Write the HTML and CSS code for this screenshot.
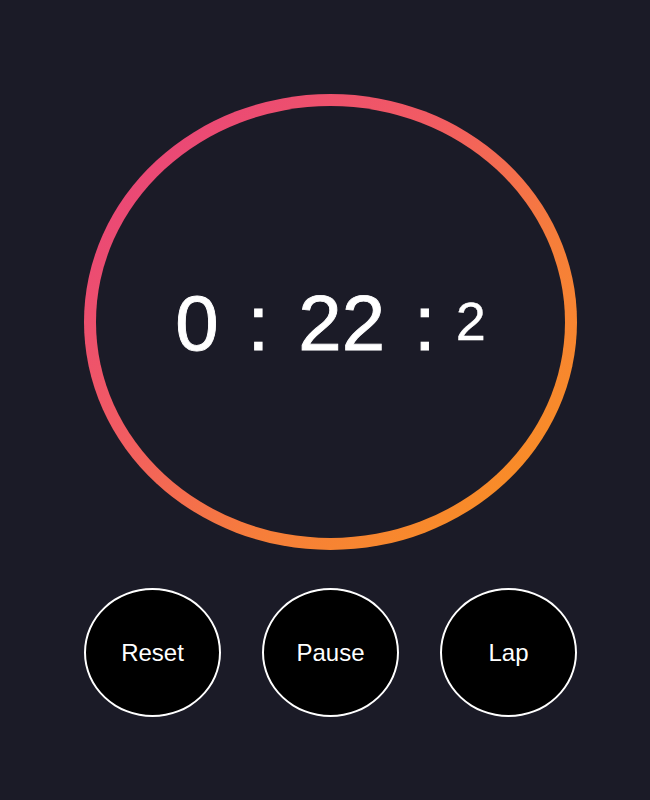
FILE: index.html
```html
<!DOCTYPE html>
<html>
<head>
<meta charset="utf-8">
<link rel="stylesheet" href="styles.css">
</head>
<body>
<main class="app">
  <div class="ring">
    <div class="face">
      <div class="time">
        <span class="big">0</span><span class="big colon">:</span><span class="big">22</span><span class="big colon">:</span><span class="small">2</span>
      </div>
    </div>
  </div>
  <div class="controls">
    <button class="btn">Reset</button>
    <button class="btn">Pause</button>
    <button class="btn">Lap</button>
  </div>
</main>
</body>
</html>
```
FILE: styles.css
```css
html, body {
  margin: 0;
  padding: 0;
  background: #1b1b27;
  height: 100%;
}
body {
  font-family: "Liberation Sans", Arial, sans-serif;
  color: #fff;
}
.app {
  width: 493px;
  margin-left: 84px;
  padding-top: 94px;
}
.ring {
  width: 493px;
  height: 456px;
  box-sizing: border-box;
  padding: 12px;
  border-radius: 50%;
  background: linear-gradient(135deg, #e63d80 0%, #f25c62 40%, #f67e3a 65%, #fa951c 100%);
}
.face {
  width: 100%;
  height: 100%;
  border-radius: 50%;
  background: #1b1b27;
  display: flex;
  align-items: center;
  justify-content: center;
}
.time {
  white-space: nowrap;
  line-height: 80px;
  padding-top: 24px;
  -webkit-text-stroke: 0.9px #fff;
}
.big {
  display: inline-block;
  font-size: 78px;
  line-height: 80px;
  margin-right: 29px;
}
.small {
  display: inline-block;
  font-size: 54px;
  line-height: 54px;
  margin-left: -9px;
  vertical-align: 10px;
  -webkit-text-stroke: 0.4px #fff;
}
.controls {
  display: flex;
  gap: 41px;
  margin-top: 38px;
}
.btn {
  width: 137px;
  height: 129px;
  box-sizing: border-box;
  border: 2px solid #fff;
  border-radius: 50%;
  background: #000;
  color: #fff;
  font-family: "Liberation Sans", Arial, sans-serif;
  font-size: 24px;
  padding: 0;
}
```
